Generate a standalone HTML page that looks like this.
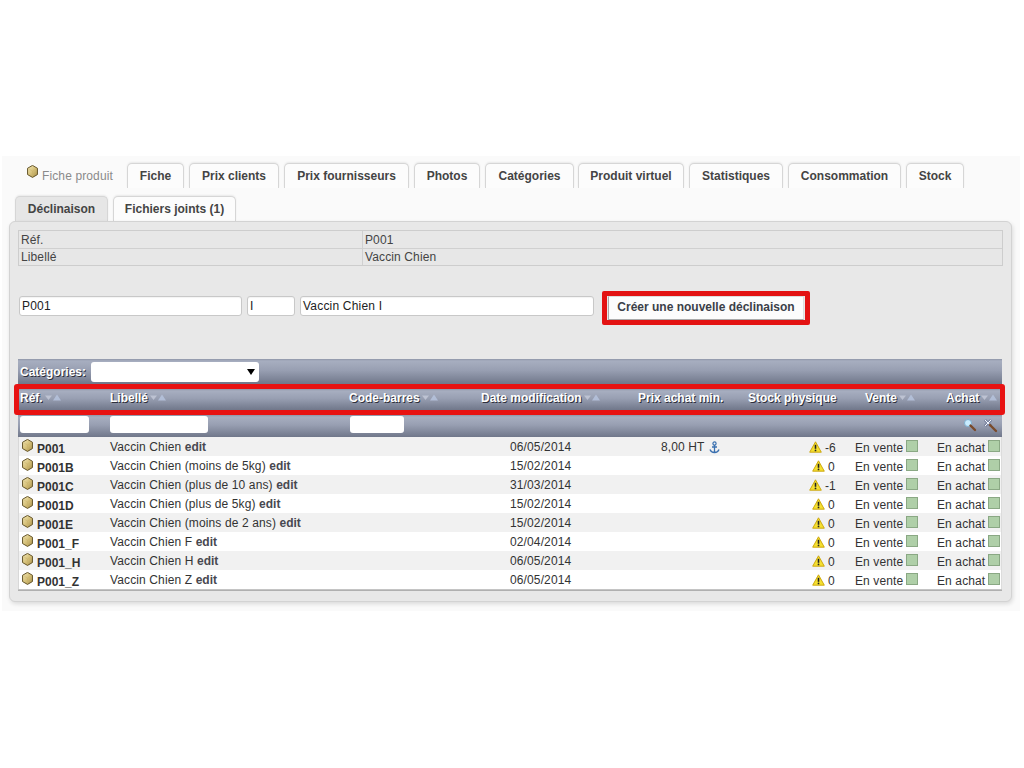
<!DOCTYPE html>
<html><head><meta charset="utf-8">
<style>
*{box-sizing:border-box;margin:0;padding:0}
html,body{width:1024px;height:768px;overflow:hidden;background:#fff;font-family:"Liberation Sans",sans-serif;font-size:12px;color:#333}
.abs{position:absolute}
#panel{position:absolute;left:2px;top:156px;width:1018px;height:455px;background:#fafafa}
.tab{position:absolute;height:25px;border:1px solid #d6d6d6;border-bottom:none;border-radius:5px 5px 0 0;background:#fcfcfc;font-weight:bold;color:#444;text-align:center;line-height:24px;box-shadow:0 -1px 2px rgba(0,0,0,0.07)}
.tab.act{background:#e6e6e6}
#box{position:absolute;left:9px;top:221px;width:1003px;height:381px;background:#e8e8e8;border:1px solid #d3d3d3;border-radius:6px;box-shadow:1px 2px 4px rgba(0,0,0,0.13)}
.t{position:absolute;white-space:nowrap}
.r{letter-spacing:0.12px}
.r b{letter-spacing:0;color:#484850}
.inp{position:absolute;height:20px;background:#fff;border:1px solid #c8c8c8;border-radius:3px;line-height:18px;padding-left:2px;color:#222;box-shadow:inset 0 1px 1px rgba(0,0,0,0.05);letter-spacing:0.2px}
.btn{background:#fcfcfc;border:1px solid #aaa;border-top-color:#ddd;border-right-color:#ddd;font-weight:bold;color:#3b3f48;text-align:center;line-height:21px}
.bar{background:linear-gradient(#8f96a8 0px,#a7aec0 2px,#989fb2 45%,#70778a 100%)}
.th{color:#fff;font-weight:bold;line-height:14px;text-shadow:1px 1px 0.6px rgba(20,20,30,0.8)}
.sel{background:#fff;border-radius:3px}
.fin{background:#fff;border-radius:3px}
.rt{line-height:14px;color:#333}
.sq{width:12px;height:12px;background:#afcfa8;border:1px solid #8aa884}
</style></head><body>
<div id="panel"></div>
<svg width="0" height="0" style="position:absolute"><defs><linearGradient id="gh" x1="0" y1="0" x2="1" y2="1"><stop offset="0" stop-color="#f2e8b8"/><stop offset="0.5" stop-color="#d6c17a"/><stop offset="1" stop-color="#a88f48"/></linearGradient></defs></svg>
<svg class="abs" style="left:27px;top:165px" width="11" height="13" viewBox="0.5 0.5 12 13.2" preserveAspectRatio="none"><path d="M6.5 0.9L11.9 3.8v6.4L6.5 13.1 1.1 10.2V3.8z" fill="url(#gh)" stroke="#5e4e22" stroke-width="1"/><path d="M2.2 4.3L6.5 6.6 10.8 4.3M6.5 6.6v5.6" fill="none" stroke="#c9b26a" stroke-width="0.7" opacity="0.7"/></svg>
<div class="t r" style="left:42px;top:169px;line-height:14px;color:#8a8a8a">Fiche produit</div>
<div class="tab" style="left:127px;top:163px;width:57px">Fiche</div>
<div class="tab" style="left:189px;top:163px;width:90px">Prix clients</div>
<div class="tab" style="left:284px;top:163px;width:125px">Prix fournisseurs</div>
<div class="tab" style="left:414px;top:163px;width:66px">Photos</div>
<div class="tab" style="left:485px;top:163px;width:89px">Catégories</div>
<div class="tab" style="left:578px;top:163px;width:106px">Produit virtuel</div>
<div class="tab" style="left:689px;top:163px;width:94px">Statistiques</div>
<div class="tab" style="left:788px;top:163px;width:113px">Consommation</div>
<div class="tab" style="left:906px;top:163px;width:58px">Stock</div>
<div class="tab act" style="left:15px;top:196px;width:93px">Déclinaison</div>
<div class="tab" style="left:113px;top:196px;width:123px">Fichiers joints (1)</div>
<div id="box"></div>
<div class="abs" style="left:18px;top:230px;width:985px;height:36px;background:#e7e7e7;border:1px solid #cdcdcd"></div>
<div class="abs" style="left:19px;top:248px;width:983px;height:1px;background:#d0d0d0"></div>
<div class="abs" style="left:362px;top:231px;width:1px;height:34px;background:#d0d0d0"></div>
<div class="t r" style="left:21px;top:233px;line-height:14px;color:#444">Réf.</div>
<div class="t r" style="left:365px;top:233px;line-height:14px;color:#444">P001</div>
<div class="t r" style="left:21px;top:250px;line-height:14px;color:#444">Libellé</div>
<div class="t r" style="left:365px;top:250px;line-height:14px;color:#444">Vaccin Chien</div>
<div class="inp" style="left:19px;top:296px;width:223px">P001</div>
<div class="inp" style="left:247px;top:296px;width:48px">I</div>
<div class="inp" style="left:300px;top:296px;width:294px">Vaccin Chien I</div>
<div class="abs" style="left:602px;top:291px;width:208px;height:34px;border:5px solid #e31212;border-radius:2px"></div>
<div class="abs btn" style="left:608px;top:296px;width:196px;height:24px">Créer une nouvelle déclinaison</div>
<div class="abs bar" style="left:18px;top:359px;width:984px;height:25px"></div>
<div class="abs bar" style="left:18px;top:389px;width:984px;height:21px"></div>
<div class="abs bar" style="left:18px;top:415px;width:984px;height:22px"></div>
<div class="abs" style="left:14px;top:384px;width:991px;height:31px;border:5px solid #e81212;border-radius:3px"></div>
<div class="t th" style="left:20px;top:365px">Catégories:</div>
<div class="abs sel" style="left:91px;top:362px;width:168px;height:20px"><svg class="abs" style="left:156px;top:7px" width="8" height="6" viewBox="0 0 8 6"><path d="M0 0H8L4 6z" fill="#000"/></svg></div>
<div class="t th" style="left:20px;top:391px">Réf.</div>
<svg class="abs" style="left:44px;top:393px" width="20" height="9" viewBox="0 0 20 9"><path d="M1 2.5H8L4.5 7z" fill="#c8cedc" opacity="0.75"/><path d="M9 7.5H17L13 1.5z" fill="#b8c6e0" opacity="0.8"/></svg>
<div class="t th" style="left:110px;top:391px">Libellé</div>
<svg class="abs" style="left:149px;top:393px" width="20" height="9" viewBox="0 0 20 9"><path d="M1 2.5H8L4.5 7z" fill="#c8cedc" opacity="0.75"/><path d="M9 7.5H17L13 1.5z" fill="#b8c6e0" opacity="0.8"/></svg>
<div class="t th" style="left:349px;top:391px">Code-barres</div>
<svg class="abs" style="left:421px;top:393px" width="20" height="9" viewBox="0 0 20 9"><path d="M1 2.5H8L4.5 7z" fill="#c8cedc" opacity="0.75"/><path d="M9 7.5H17L13 1.5z" fill="#b8c6e0" opacity="0.8"/></svg>
<div class="t th" style="left:481px;top:391px">Date modification</div>
<svg class="abs" style="left:583px;top:393px" width="20" height="9" viewBox="0 0 20 9"><path d="M1 2.5H8L4.5 7z" fill="#c8cedc" opacity="0.75"/><path d="M9 7.5H17L13 1.5z" fill="#b8c6e0" opacity="0.8"/></svg>
<div class="t th" style="left:638px;top:391px">Prix achat min.</div>
<div class="t th" style="left:748px;top:391px">Stock physique</div>
<div class="t th" style="left:865px;top:391px">Vente</div>
<svg class="abs" style="left:898px;top:393px" width="20" height="9" viewBox="0 0 20 9"><path d="M1 2.5H8L4.5 7z" fill="#c8cedc" opacity="0.75"/><path d="M9 7.5H17L13 1.5z" fill="#b8c6e0" opacity="0.8"/></svg>
<div class="t th" style="left:946px;top:391px">Achat</div>
<svg class="abs" style="left:980px;top:393px" width="20" height="9" viewBox="0 0 20 9"><path d="M1 2.5H8L4.5 7z" fill="#c8cedc" opacity="0.75"/><path d="M9 7.5H17L13 1.5z" fill="#b8c6e0" opacity="0.8"/></svg>
<div class="abs fin" style="left:20px;top:416px;width:69px;height:17px"></div>
<div class="abs fin" style="left:110px;top:416px;width:98px;height:17px"></div>
<div class="abs fin" style="left:350px;top:416px;width:54px;height:17px"></div>
<svg class="abs" style="left:963px;top:418px" width="14" height="14" viewBox="0 0 14 14"><circle cx="5" cy="5" r="3.5" fill="#c8ecff" stroke="#7fb0d0" stroke-width="1"/><path d="M7.5 7.5L12 12" stroke="#7a4a2a" stroke-width="2.4" stroke-linecap="round"/></svg>
<svg class="abs" style="left:983px;top:418px" width="15" height="15" viewBox="0 0 15 15"><path d="M2 2L8 8M8 2L2 8" stroke="#34406a" stroke-width="2.4"/><path d="M2 2L8 8M8 2L2 8" stroke="#f4f8ff" stroke-width="1.1"/><path d="M7 7L13 13" stroke="#7a4a2a" stroke-width="2.4" stroke-linecap="round"/></svg>
<div class="abs" style="left:19px;top:437px;width:983px;height:19px;background:#f1f1f1"></div>
<svg class="abs" style="left:22px;top:439px" width="11" height="13" viewBox="0.5 0.5 12 13.2" preserveAspectRatio="none"><path d="M6.5 0.9L11.9 3.8v6.4L6.5 13.1 1.1 10.2V3.8z" fill="url(#gh)" stroke="#5e4e22" stroke-width="1"/><path d="M2.2 4.3L6.5 6.6 10.8 4.3M6.5 6.6v5.6" fill="none" stroke="#c9b26a" stroke-width="0.7" opacity="0.7"/></svg>
<div class="t rt" style="left:37px;top:442px;font-weight:bold">P001</div>
<div class="t rt r" style="left:110px;top:440px">Vaccin Chien <b>edit</b></div>
<div class="t rt r" style="left:510px;top:440px">06/05/2014</div>
<div class="t rt r" style="left:661px;top:440px">8,00 HT</div>
<svg class="abs" style="left:708px;top:441px" width="13" height="13" viewBox="0 0 13 13"><circle cx="6.5" cy="2.5" r="1.6" fill="none" stroke="#3a70b0" stroke-width="1.2"/><path d="M6.5 4v7M4 6h5M2 8.5q1 3 4.5 3 3.5 0 4.5-3" fill="none" stroke="#3a70b0" stroke-width="1.3"/></svg>
<svg class="abs" style="left:809px;top:441px" width="13" height="12" viewBox="0 0 13 12"><path d="M6.5 0.8L12.3 11.2H0.7z" fill="#f5e030" stroke="#c8a000" stroke-width="0.9" stroke-linejoin="round"/><path d="M6.5 3.8v4" stroke="#222" stroke-width="1.6"/><circle cx="6.5" cy="9.4" r="0.9" fill="#222"/></svg>
<div class="t rt r" style="left:825px;top:441px">-6</div>
<div class="t rt r" style="left:855px;top:441px">En vente</div>
<div class="abs sq" style="left:906px;top:440px"></div>
<div class="t rt r" style="left:937px;top:441px">En achat</div>
<div class="abs sq" style="left:988px;top:440px"></div>
<div class="abs" style="left:19px;top:456px;width:983px;height:19px;background:#ffffff"></div>
<svg class="abs" style="left:22px;top:458px" width="11" height="13" viewBox="0.5 0.5 12 13.2" preserveAspectRatio="none"><path d="M6.5 0.9L11.9 3.8v6.4L6.5 13.1 1.1 10.2V3.8z" fill="url(#gh)" stroke="#5e4e22" stroke-width="1"/><path d="M2.2 4.3L6.5 6.6 10.8 4.3M6.5 6.6v5.6" fill="none" stroke="#c9b26a" stroke-width="0.7" opacity="0.7"/></svg>
<div class="t rt" style="left:37px;top:461px;font-weight:bold">P001B</div>
<div class="t rt r" style="left:110px;top:459px">Vaccin Chien (moins de 5kg) <b>edit</b></div>
<div class="t rt r" style="left:510px;top:459px">15/02/2014</div>
<svg class="abs" style="left:812px;top:460px" width="13" height="12" viewBox="0 0 13 12"><path d="M6.5 0.8L12.3 11.2H0.7z" fill="#f5e030" stroke="#c8a000" stroke-width="0.9" stroke-linejoin="round"/><path d="M6.5 3.8v4" stroke="#222" stroke-width="1.6"/><circle cx="6.5" cy="9.4" r="0.9" fill="#222"/></svg>
<div class="t rt r" style="left:828px;top:460px">0</div>
<div class="t rt r" style="left:855px;top:460px">En vente</div>
<div class="abs sq" style="left:906px;top:459px"></div>
<div class="t rt r" style="left:937px;top:460px">En achat</div>
<div class="abs sq" style="left:988px;top:459px"></div>
<div class="abs" style="left:19px;top:475px;width:983px;height:19px;background:#f1f1f1"></div>
<svg class="abs" style="left:22px;top:477px" width="11" height="13" viewBox="0.5 0.5 12 13.2" preserveAspectRatio="none"><path d="M6.5 0.9L11.9 3.8v6.4L6.5 13.1 1.1 10.2V3.8z" fill="url(#gh)" stroke="#5e4e22" stroke-width="1"/><path d="M2.2 4.3L6.5 6.6 10.8 4.3M6.5 6.6v5.6" fill="none" stroke="#c9b26a" stroke-width="0.7" opacity="0.7"/></svg>
<div class="t rt" style="left:37px;top:480px;font-weight:bold">P001C</div>
<div class="t rt r" style="left:110px;top:478px">Vaccin Chien (plus de 10 ans) <b>edit</b></div>
<div class="t rt r" style="left:510px;top:478px">31/03/2014</div>
<svg class="abs" style="left:809px;top:479px" width="13" height="12" viewBox="0 0 13 12"><path d="M6.5 0.8L12.3 11.2H0.7z" fill="#f5e030" stroke="#c8a000" stroke-width="0.9" stroke-linejoin="round"/><path d="M6.5 3.8v4" stroke="#222" stroke-width="1.6"/><circle cx="6.5" cy="9.4" r="0.9" fill="#222"/></svg>
<div class="t rt r" style="left:825px;top:479px">-1</div>
<div class="t rt r" style="left:855px;top:479px">En vente</div>
<div class="abs sq" style="left:906px;top:478px"></div>
<div class="t rt r" style="left:937px;top:479px">En achat</div>
<div class="abs sq" style="left:988px;top:478px"></div>
<div class="abs" style="left:19px;top:494px;width:983px;height:19px;background:#ffffff"></div>
<svg class="abs" style="left:22px;top:496px" width="11" height="13" viewBox="0.5 0.5 12 13.2" preserveAspectRatio="none"><path d="M6.5 0.9L11.9 3.8v6.4L6.5 13.1 1.1 10.2V3.8z" fill="url(#gh)" stroke="#5e4e22" stroke-width="1"/><path d="M2.2 4.3L6.5 6.6 10.8 4.3M6.5 6.6v5.6" fill="none" stroke="#c9b26a" stroke-width="0.7" opacity="0.7"/></svg>
<div class="t rt" style="left:37px;top:499px;font-weight:bold">P001D</div>
<div class="t rt r" style="left:110px;top:497px">Vaccin Chien (plus de 5kg) <b>edit</b></div>
<div class="t rt r" style="left:510px;top:497px">15/02/2014</div>
<svg class="abs" style="left:812px;top:498px" width="13" height="12" viewBox="0 0 13 12"><path d="M6.5 0.8L12.3 11.2H0.7z" fill="#f5e030" stroke="#c8a000" stroke-width="0.9" stroke-linejoin="round"/><path d="M6.5 3.8v4" stroke="#222" stroke-width="1.6"/><circle cx="6.5" cy="9.4" r="0.9" fill="#222"/></svg>
<div class="t rt r" style="left:828px;top:498px">0</div>
<div class="t rt r" style="left:855px;top:498px">En vente</div>
<div class="abs sq" style="left:906px;top:497px"></div>
<div class="t rt r" style="left:937px;top:498px">En achat</div>
<div class="abs sq" style="left:988px;top:497px"></div>
<div class="abs" style="left:19px;top:513px;width:983px;height:19px;background:#f1f1f1"></div>
<svg class="abs" style="left:22px;top:515px" width="11" height="13" viewBox="0.5 0.5 12 13.2" preserveAspectRatio="none"><path d="M6.5 0.9L11.9 3.8v6.4L6.5 13.1 1.1 10.2V3.8z" fill="url(#gh)" stroke="#5e4e22" stroke-width="1"/><path d="M2.2 4.3L6.5 6.6 10.8 4.3M6.5 6.6v5.6" fill="none" stroke="#c9b26a" stroke-width="0.7" opacity="0.7"/></svg>
<div class="t rt" style="left:37px;top:518px;font-weight:bold">P001E</div>
<div class="t rt r" style="left:110px;top:516px">Vaccin Chien (moins de 2 ans) <b>edit</b></div>
<div class="t rt r" style="left:510px;top:516px">15/02/2014</div>
<svg class="abs" style="left:812px;top:517px" width="13" height="12" viewBox="0 0 13 12"><path d="M6.5 0.8L12.3 11.2H0.7z" fill="#f5e030" stroke="#c8a000" stroke-width="0.9" stroke-linejoin="round"/><path d="M6.5 3.8v4" stroke="#222" stroke-width="1.6"/><circle cx="6.5" cy="9.4" r="0.9" fill="#222"/></svg>
<div class="t rt r" style="left:828px;top:517px">0</div>
<div class="t rt r" style="left:855px;top:517px">En vente</div>
<div class="abs sq" style="left:906px;top:516px"></div>
<div class="t rt r" style="left:937px;top:517px">En achat</div>
<div class="abs sq" style="left:988px;top:516px"></div>
<div class="abs" style="left:19px;top:532px;width:983px;height:19px;background:#ffffff"></div>
<svg class="abs" style="left:22px;top:534px" width="11" height="13" viewBox="0.5 0.5 12 13.2" preserveAspectRatio="none"><path d="M6.5 0.9L11.9 3.8v6.4L6.5 13.1 1.1 10.2V3.8z" fill="url(#gh)" stroke="#5e4e22" stroke-width="1"/><path d="M2.2 4.3L6.5 6.6 10.8 4.3M6.5 6.6v5.6" fill="none" stroke="#c9b26a" stroke-width="0.7" opacity="0.7"/></svg>
<div class="t rt" style="left:37px;top:537px;font-weight:bold">P001_F</div>
<div class="t rt r" style="left:110px;top:535px">Vaccin Chien F <b>edit</b></div>
<div class="t rt r" style="left:510px;top:535px">02/04/2014</div>
<svg class="abs" style="left:812px;top:536px" width="13" height="12" viewBox="0 0 13 12"><path d="M6.5 0.8L12.3 11.2H0.7z" fill="#f5e030" stroke="#c8a000" stroke-width="0.9" stroke-linejoin="round"/><path d="M6.5 3.8v4" stroke="#222" stroke-width="1.6"/><circle cx="6.5" cy="9.4" r="0.9" fill="#222"/></svg>
<div class="t rt r" style="left:828px;top:536px">0</div>
<div class="t rt r" style="left:855px;top:536px">En vente</div>
<div class="abs sq" style="left:906px;top:535px"></div>
<div class="t rt r" style="left:937px;top:536px">En achat</div>
<div class="abs sq" style="left:988px;top:535px"></div>
<div class="abs" style="left:19px;top:551px;width:983px;height:19px;background:#f1f1f1"></div>
<svg class="abs" style="left:22px;top:553px" width="11" height="13" viewBox="0.5 0.5 12 13.2" preserveAspectRatio="none"><path d="M6.5 0.9L11.9 3.8v6.4L6.5 13.1 1.1 10.2V3.8z" fill="url(#gh)" stroke="#5e4e22" stroke-width="1"/><path d="M2.2 4.3L6.5 6.6 10.8 4.3M6.5 6.6v5.6" fill="none" stroke="#c9b26a" stroke-width="0.7" opacity="0.7"/></svg>
<div class="t rt" style="left:37px;top:556px;font-weight:bold">P001_H</div>
<div class="t rt r" style="left:110px;top:554px">Vaccin Chien H <b>edit</b></div>
<div class="t rt r" style="left:510px;top:554px">06/05/2014</div>
<svg class="abs" style="left:812px;top:555px" width="13" height="12" viewBox="0 0 13 12"><path d="M6.5 0.8L12.3 11.2H0.7z" fill="#f5e030" stroke="#c8a000" stroke-width="0.9" stroke-linejoin="round"/><path d="M6.5 3.8v4" stroke="#222" stroke-width="1.6"/><circle cx="6.5" cy="9.4" r="0.9" fill="#222"/></svg>
<div class="t rt r" style="left:828px;top:555px">0</div>
<div class="t rt r" style="left:855px;top:555px">En vente</div>
<div class="abs sq" style="left:906px;top:554px"></div>
<div class="t rt r" style="left:937px;top:555px">En achat</div>
<div class="abs sq" style="left:988px;top:554px"></div>
<div class="abs" style="left:19px;top:570px;width:983px;height:19px;background:#ffffff"></div>
<svg class="abs" style="left:22px;top:572px" width="11" height="13" viewBox="0.5 0.5 12 13.2" preserveAspectRatio="none"><path d="M6.5 0.9L11.9 3.8v6.4L6.5 13.1 1.1 10.2V3.8z" fill="url(#gh)" stroke="#5e4e22" stroke-width="1"/><path d="M2.2 4.3L6.5 6.6 10.8 4.3M6.5 6.6v5.6" fill="none" stroke="#c9b26a" stroke-width="0.7" opacity="0.7"/></svg>
<div class="t rt" style="left:37px;top:575px;font-weight:bold">P001_Z</div>
<div class="t rt r" style="left:110px;top:573px">Vaccin Chien Z <b>edit</b></div>
<div class="t rt r" style="left:510px;top:573px">06/05/2014</div>
<svg class="abs" style="left:812px;top:574px" width="13" height="12" viewBox="0 0 13 12"><path d="M6.5 0.8L12.3 11.2H0.7z" fill="#f5e030" stroke="#c8a000" stroke-width="0.9" stroke-linejoin="round"/><path d="M6.5 3.8v4" stroke="#222" stroke-width="1.6"/><circle cx="6.5" cy="9.4" r="0.9" fill="#222"/></svg>
<div class="t rt r" style="left:828px;top:574px">0</div>
<div class="t rt r" style="left:855px;top:574px">En vente</div>
<div class="abs sq" style="left:906px;top:573px"></div>
<div class="t rt r" style="left:937px;top:574px">En achat</div>
<div class="abs sq" style="left:988px;top:573px"></div>
<div class="abs" style="left:18px;top:437px;width:1px;height:153px;background:#d8d8d8"></div>
<div class="abs" style="left:1001px;top:437px;width:1px;height:153px;background:#dcdcdc"></div>
<div class="abs" style="left:18px;top:589px;width:984px;height:1px;background:#c4c4c4"></div>
<div class="abs" style="left:18px;top:590px;width:984px;height:1px;background:#b0b0b0"></div>
</body></html>
